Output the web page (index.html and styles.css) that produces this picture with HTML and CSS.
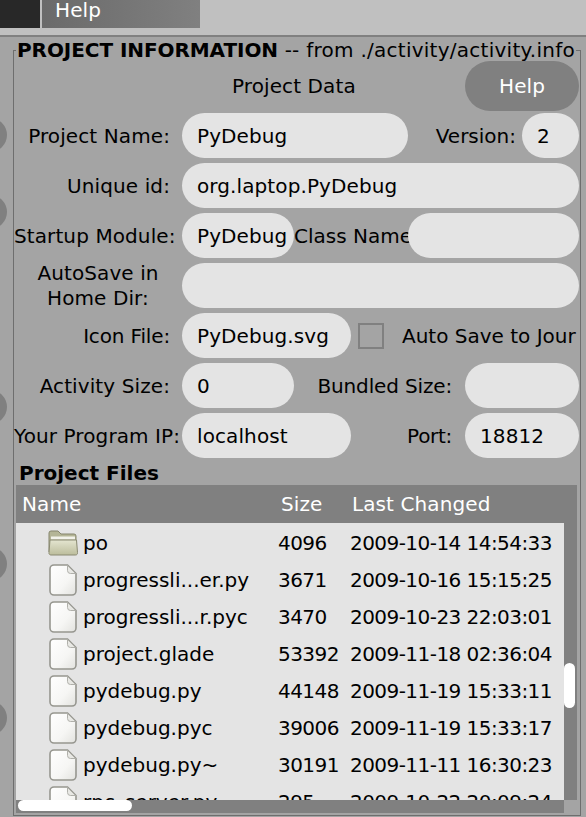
FILE: index.html
```html
<!DOCTYPE html>
<html lang="en">
<head>
<meta charset="utf-8">
<title>PyDebug</title>
<link rel="stylesheet" href="styles.css">
</head>
<body>
<svg width="0" height="0" class="defs" aria-hidden="true">
  <defs>
    <linearGradient id="pg" x1="0" y1="0" x2="1" y2="1"><stop offset="0" stop-color="#fff"/><stop offset=".6" stop-color="#f6f6f4"/><stop offset="1" stop-color="#e2e2de"/></linearGradient>
    <linearGradient id="fg" x1="0" y1="0" x2="0" y2="1"><stop offset="0" stop-color="#e4e5d0"/><stop offset="1" stop-color="#bcbd9c"/></linearGradient>
    <symbol id="file" viewBox="0 0 28 32">
      <path d="M5 1h13.500l8.500 8.500V27a4 4 0 0 1-4 4H5a4 4 0 0 1-4-4V5a4 4 0 0 1 4-4z" fill="url(#pg)" stroke="#96968f" stroke-width="1.600"/>
      <path d="M18.500 1.500v5a3 3 0 0 0 3 3h5z" fill="#e8e8e4" stroke="#b0b0aa" stroke-width="1"/>
    </symbol>
    <symbol id="folder" viewBox="0 0 30 26">
      <path d="M1 22V3a2 2 0 0 1 2-2h7l3 3h13a2 2 0 0 1 2 2v16z" fill="#b4b596" stroke="#85856c"/>
      <path d="M3 6.500h24v3H3z" fill="#f2f2ea"/>
      <path d="M2 10h26.500l1 12.500a2 2 0 0 1-2 2.500H3a2 2 0 0 1-2-2.500z" fill="url(#fg)" stroke="#8a8a72"/>
    </symbol>
  </defs>
</svg>
<header class="menubar">
  <div class="tab-dark"></div>
  <div class="tab-help">Help</div>
</header>
<main class="page">
  <span class="nub nub-1"></span><span class="nub nub-2"></span><span class="nub nub-3"></span><span class="nub nub-4"></span><span class="nub nub-5"></span>
  <section class="frame">
    <h1 class="legend"><b class="legend-b">PROJECT INFORMATION</b> -- from ./activity/activity.info</h1>
    <div class="row row-head">
      <div class="head-title">Project Data</div>
      <button class="help-btn">Help</button>
    </div>
    <div class="row"><label class="lab w-lab">Project Name:</label><div class="pill w-name">PyDebug</div><label class="lab w-ver">Version:</label><div class="pill w-num">2</div></div>
    <div class="row"><label class="lab w-lab">Unique id:</label><div class="pill grow">org.laptop.PyDebug</div></div>
    <div class="row"><label class="lab w-lab w-start">Startup Module:</label><div class="pill w-mod">PyDebug</div><label class="lab w-class">Class Name</label><div class="pill grow"></div></div>
    <div class="row"><label class="lab w-lab two">AutoSave in<br>Home Dir:</label><div class="pill grow"></div></div>
    <div class="row"><label class="lab w-lab w-iconlab">Icon File:</label><div class="pill w-icon">PyDebug.svg</div><span class="check"></span><label class="lab auto">Auto Save to Jour</label></div>
    <div class="row"><label class="lab w-lab">Activity Size:</label><div class="pill w-mod">0</div><label class="lab w-bund">Bundled Size:</label><div class="pill grow"></div></div>
    <div class="row"><label class="lab w-lab w-ip">Your Program IP:</label><div class="pill w-icon">localhost</div><label class="lab w-port">Port:</label><div class="pill grow">18812</div></div>
    <h2 class="files-title">Project Files</h2>
    <div class="table">
      <div class="thead"><span class="c-name">Name</span><span class="c-size">Size</span><span class="c-date">Last Changed</span></div>
      <div class="tbody">
        <div class="rows">
          <div class="tr"><svg class="ic ic-folder"><use href="#folder"/></svg><span class="c-file">po</span><span class="c-s">4096</span><span class="c-d">2009-10-14 14:54:33</span></div>
          <div class="tr"><svg class="ic"><use href="#file"/></svg><span class="c-file">progressli...er.py</span><span class="c-s">3671</span><span class="c-d">2009-10-16 15:15:25</span></div>
          <div class="tr"><svg class="ic"><use href="#file"/></svg><span class="c-file">progressli...r.pyc</span><span class="c-s">3470</span><span class="c-d">2009-10-23 22:03:01</span></div>
          <div class="tr"><svg class="ic"><use href="#file"/></svg><span class="c-file">project.glade</span><span class="c-s">53392</span><span class="c-d">2009-11-18 02:36:04</span></div>
          <div class="tr"><svg class="ic"><use href="#file"/></svg><span class="c-file">pydebug.py</span><span class="c-s">44148</span><span class="c-d">2009-11-19 15:33:11</span></div>
          <div class="tr"><svg class="ic"><use href="#file"/></svg><span class="c-file">pydebug.pyc</span><span class="c-s">39006</span><span class="c-d">2009-11-19 15:33:17</span></div>
          <div class="tr"><svg class="ic"><use href="#file"/></svg><span class="c-file">pydebug.py~</span><span class="c-s">30191</span><span class="c-d">2009-11-11 16:30:23</span></div>
          <div class="tr"><svg class="ic"><use href="#file"/></svg><span class="c-file">rpc_server.py</span><span class="c-s">295</span><span class="c-d">2009-10-22 20:09:24</span></div>
        </div>
        <div class="vtrack"><span class="vthumb"></span></div>
      </div>
      <div class="hbar"><div class="htrack"><span class="hthumb"></span></div><div class="corner"></div></div>
    </div>
  </section>
</main>
</body>
</html>
```

FILE: styles.css
```css
* { box-sizing: border-box; }
html, body { margin: 0; padding: 0; }
body {
  width: 586px; height: 817px; overflow: hidden; background: #a4a4a4;
  font-family: "DejaVu Sans", sans-serif; font-size: 20px; letter-spacing: .1px; color: #000;
}
.defs { position: absolute; }
.menubar { height: 37px; background: #c0c0c0; border-bottom: 2px solid #808080; display: flex; align-items: flex-start; }
.tab-dark { width: 40px; height: 28px; background: #282828; }
.tab-help { width: 158px; height: 28px; margin-left: 2px; background: linear-gradient(90deg, #6a6a6a, #808080); color: #fff; padding-left: 13px; line-height: 20px; }
.page { position: relative; height: 780px; padding: 13px 5px 0 13px; }
.nub { position: absolute; left: -27px; width: 34px; height: 34px; border-radius: 50%; background: #808080; }
.nub-1 { top: 81px; } .nub-2 { top: 158px; } .nub-3 { top: 353px; } .nub-4 { top: 510px; } .nub-5 { top: 664px; }
.frame { position: relative; height: 766px; border: 1px solid #6e6e6e; padding-top: 10px; }
.legend { position: absolute; top: -11px; left: 2px; margin: 0; padding: 0 1px; background: #a4a4a4; font-size: 20px; line-height: 20px; font-weight: 400; letter-spacing: .26px; white-space: nowrap; }
.legend-b { letter-spacing: -.07px; }
.row { display: flex; align-items: center; height: 45px; margin-bottom: 5px; }
.row-head { margin-bottom: 2px; height: 50px; position: relative; justify-content: flex-end; padding-right: 1px; }
.head-title { position: absolute; left: 218px; top: 14px; line-height: 22px; }
.help-btn { width: 114px; height: 50px; border: 0; border-radius: 25px; background: #808080; color: #fff; font: inherit; letter-spacing: inherit; padding: 0; }
.lab { flex: none; text-align: right; white-space: nowrap; }
.pill { flex: none; height: 45px; line-height: 47px; border-radius: 22.500px; background: #e4e4e4; padding-left: 15px; white-space: nowrap; overflow: hidden; }
.grow { flex: 1; margin-right: 1px; }
.w-lab { width: 168px; padding-right: 12px; }
.w-start { padding-right: 7px; }
.w-ip { padding-right: 2px; }
.w-iconlab { letter-spacing: -.15px; }
.two { line-height: 25px; text-align: center; padding-right: 0; padding-left: 0; }
.w-name { width: 226px; }
.w-ver { width: 108px; margin-right: 6px; letter-spacing: 0; }
.w-num { width: 57px; }
.w-mod { width: 112px; }
.w-class { width: 114px; text-align: left; letter-spacing: 0; }
.w-icon { width: 169px; }
.check { width: 26px; height: 26px; margin-left: 7px; border: 2px solid #808080; }
.auto { margin-left: 18px; letter-spacing: 0; }
.w-bund { width: 158px; margin-right: 13px; letter-spacing: -.15px; }
.w-port { width: 101px; margin-right: 13px; letter-spacing: -.3px; }
.files-title { margin: 0 0 2px 5px; font-size: 20px; line-height: 20px; font-weight: 700; letter-spacing: 0; }
.table { margin: 0 3px 0 2px; }
.thead { height: 38px; background: #808080; color: #fff; display: flex; align-items: center; }
.c-name { width: 265px; padding-left: 6px; }
.c-size { width: 71px; }
.tbody { height: 277px; display: flex; background: #e4e4e4; overflow: hidden; }
.rows { flex: 1; min-width: 0; padding-top: 1px; }
.tr { height: 37px; display: flex; align-items: center; position: relative; white-space: nowrap; }
.ic { flex: none; width: 28px; height: 32px; margin-left: 33px; }
.ic-folder { width: 30px; height: 26px; margin-left: 32px; }
.c-file { position: absolute; left: 67px; letter-spacing: 0; }
.c-s { position: absolute; left: 262px; letter-spacing: -.55px; }
.c-d { position: absolute; left: 334px; letter-spacing: -.55px; }
.vtrack { flex: none; width: 13px; background: #808080; position: relative; }
.vthumb { position: absolute; left: 0; top: 140px; width: 11px; height: 45px; border-radius: 6px; background: #fff; }
.hbar { display: flex; height: 13px; }
.htrack { flex: 1; background: #808080; position: relative; }
.hthumb { position: absolute; left: 2px; top: 0; width: 114px; height: 11px; border-radius: 6px; background: #fff; }
.corner { width: 13px; background: #a4a4a4; }
```
